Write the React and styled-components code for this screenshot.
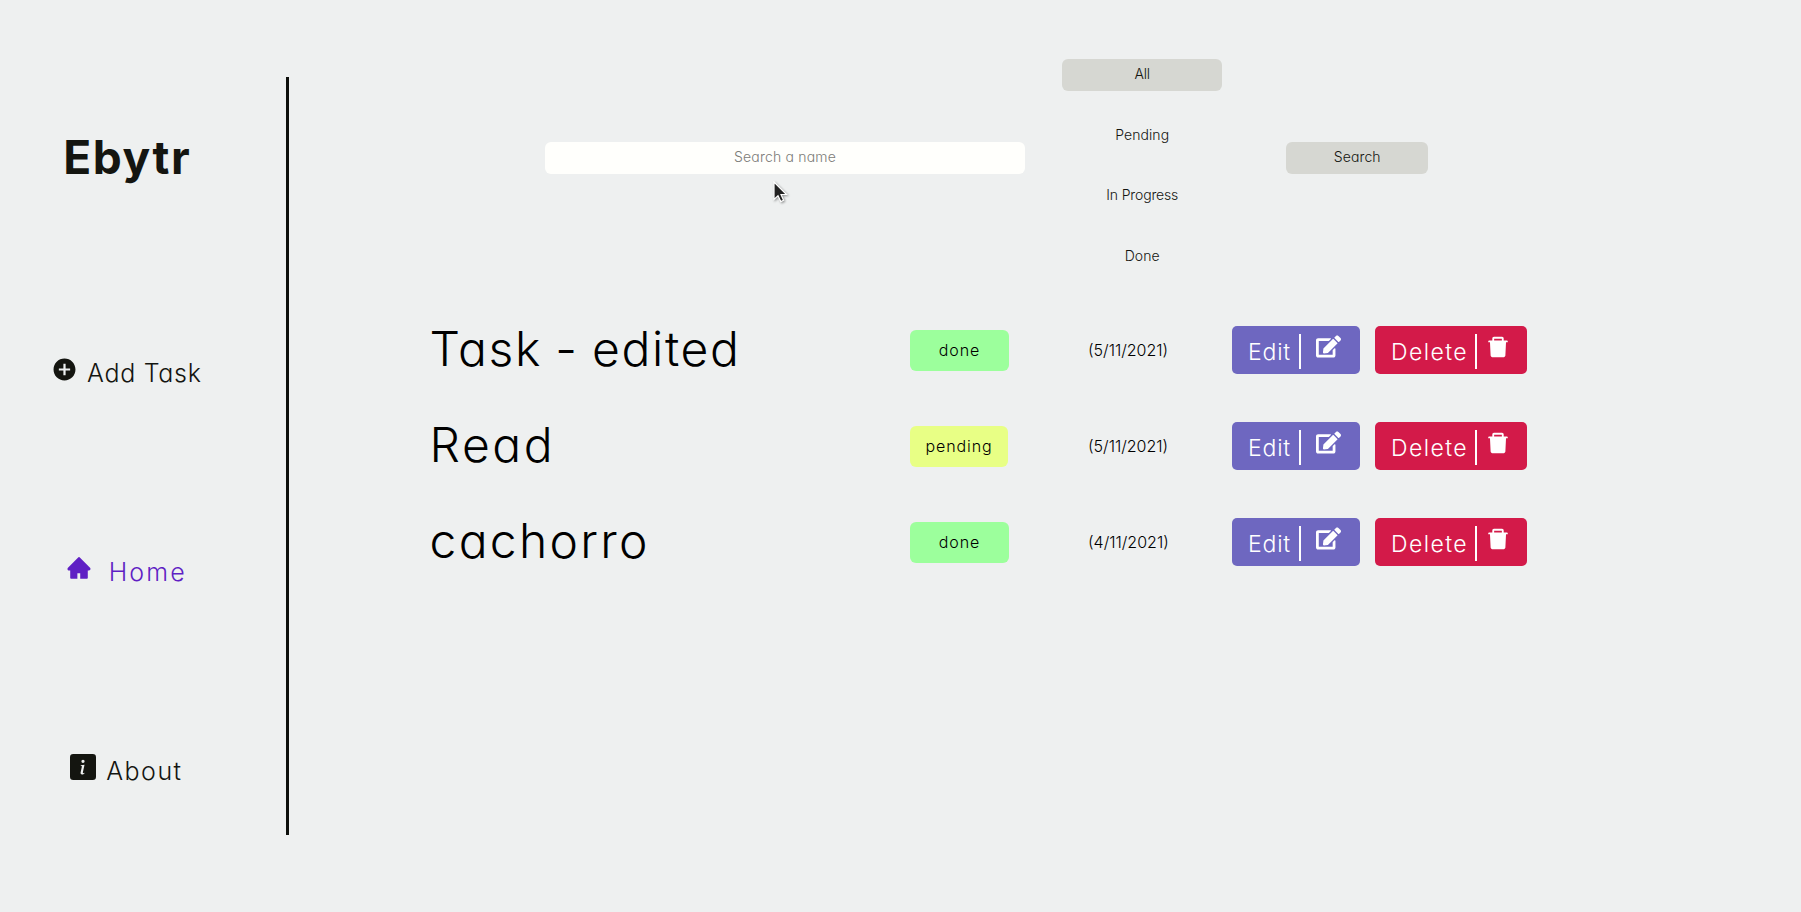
import React from "react";
import styled, { createGlobalStyle } from "styled-components";
import { IoMdAddCircle } from "react-icons/io";
import { AiFillHome, AiFillDelete } from "react-icons/ai";
import { BsFillInfoSquareFill } from "react-icons/bs";
import { FaEdit } from "react-icons/fa";

const GlobalStyle = createGlobalStyle`
  * { box-sizing: border-box; }
  body {
    margin: 0;
    background: #eef0f0;
    color: #141510;
    font-family: Inter, "Open Sans", sans-serif;
    font-weight: 300;
    font-feature-settings: "cv11";
  }
  button, input { font: inherit; font-feature-settings: inherit; color: inherit; border: none; margin: 0; padding: 0; }
  h1, ul { margin: 0; padding: 0; }
`;

const Page = styled.div`
  display: flex;
  height: 912px;
  overflow: hidden;
`;

const Label = styled.span`
  white-space: nowrap;
  letter-spacing: ${(p) => p.$spacing || 0}px;
`;

const Sidebar = styled.aside`
  display: flex;
  flex-direction: column;
  flex: none;
  width: 289px;
  height: 758px;
  margin-top: 77px;
  padding-top: 50px;
  border-right: 3px solid #0d0f0c;
`;

const Logo = styled.h1`
  height: 60px;
  margin-bottom: 166px;
  padding-left: 63.2px;
  font-size: 46px;
  font-weight: 660;
  line-height: 60px;
  letter-spacing: 1.6px;
`;

const Nav = styled.nav`
  display: flex;
  flex-direction: column;
  gap: 159px;
`;

const NavLink = styled.a`
  display: flex;
  align-items: center;
  gap: ${(p) => p.$gap}px;
  height: 40px;
  padding-left: ${(p) => p.$indent}px;
  font-size: 25px;
  color: ${(p) => (p.$active ? "#5f1fc4" : "#141510")};

  svg {
    flex: none;
    margin-bottom: 8px;
    font-size: ${(p) => p.$icon || 26}px;
  }
`;

const Main = styled.main`
  flex: 1;
`;

const SearchBar = styled.header`
  display: flex;
  align-items: flex-start;
  height: 326px;
  padding: 59px 0 0 256px;
  font-size: 14px;
  font-weight: 340;
`;

const SearchInput = styled.input`
  width: 480px;
  height: 32px;
  margin: 83px 37px 0 0;
  padding-bottom: 4px;
  border-radius: 6px;
  background: #fffffc;
  text-align: center;
  letter-spacing: 0.2px;

  &::placeholder { color: #7c7c78; opacity: 1; }
`;

const Filters = styled.div`
  display: flex;
  flex-direction: column;
  gap: 28.4px;
`;

const Button = styled.button`
  width: ${(p) => p.$width}px;
  height: 32px;
  padding: 0 0 ${(p) => (p.$filled ? 4 : 2)}px 0.5px;
  border-radius: 6px;
  background: ${(p) => (p.$filled ? "#d6d7d2" : "transparent")};
`;

const SearchButton = styled(Button)`
  margin: 83px 0 0 64px;
`;

const TaskList = styled.ul`
  display: flex;
  flex-direction: column;
  gap: 48px;
  padding-left: 140px;
  list-style: none;
  color: #000;
`;

const TaskRow = styled.li`
  display: grid;
  grid-template-columns: 481px 178px 144px 143px 152px;
  grid-template-rows: 48px;
  align-items: center;
`;

const TaskName = styled.div`
  height: 48px;
  padding-left: 0.5px;
  font-size: 48px;
  line-height: 45px;
  word-spacing: -2px;
`;

const badgeColors = { done: "#9cff9c", pending: "#e8ff85" };

const Badge = styled.div`
  display: flex;
  align-items: center;
  justify-content: center;
  width: ${(p) => (p.$status === "done" ? 99 : 98)}px;
  height: 41px;
  border-radius: 6px;
  background: ${(p) => badgeColors[p.$status]};
  font-size: 16px;
`;

const TaskDate = styled.div`
  font-size: 16px;
`;

const Action = styled.button`
  display: flex;
  align-items: center;
  width: ${(p) => p.$width}px;
  height: 48px;
  padding-left: 16px;
  border-radius: 5px;
  background: ${(p) => p.$color};
  color: #fff;
  font-size: 23px;
`;

const ActionLabel = styled(Label)`
  width: ${(p) => p.$width}px;
  padding-top: 3px;
  text-align: left;
`;

const Divider = styled.span`
  width: 2px;
  height: 35px;
  margin-top: 3px;
  background: #fff;
`;

const ActionIcon = styled.span`
  display: flex;
  margin: 0 0 7px ${(p) => p.$gap}px;
  font-size: ${(p) => p.$size}px;
`;

const Cursor = styled.svg`
  position: absolute;
  left: 773px;
  top: 181px;
  filter: drop-shadow(1px 1px 1px rgba(0, 0, 0, 0.4));
`;

const links = [
  { text: "Add Task", Icon: IoMdAddCircle, icon: 27, indent: 51, gap: 9, spacing: 0.7 },
  { text: "Home", Icon: AiFillHome, indent: 66.2, gap: 16.5, spacing: 2.1, active: true },
  { text: "About", Icon: BsFillInfoSquareFill, indent: 70, gap: 10.2, spacing: 1.5 },
];

const filters = [
  { text: "All", spacing: -0.2 },
  { text: "Pending", spacing: 0.05 },
  { text: "In Progress", spacing: -0.15 },
  { text: "Done", spacing: 0.1 },
];

const tasks = [
  { name: "Task - edited", spacing: 1.7, status: "done", date: "(5/11/2021)" },
  { name: "Read", spacing: 2.6, status: "pending", date: "(5/11/2021)" },
  { name: "cachorro", spacing: 2.3, status: "done", date: "(4/11/2021)" },
];

export default function App() {
  return (
    <>
      <GlobalStyle />
      <Page>
        <Sidebar>
          <Logo>Ebytr</Logo>
          <Nav>
            {links.map(({ text, Icon, icon, indent, gap, spacing, active }) => (
              <NavLink key={text} $icon={icon} $indent={indent} $gap={gap} $active={active}>
                <Icon />
                <Label $spacing={spacing}>{text}</Label>
              </NavLink>
            ))}
          </Nav>
        </Sidebar>
        <Main>
          <SearchBar>
            <SearchInput placeholder="Search a name" />
            <Filters>
              {filters.map(({ text, spacing }, i) => (
                <Button key={text} $width={160} $filled={i === 0}>
                  <Label $spacing={spacing}>{text}</Label>
                </Button>
              ))}
            </Filters>
            <SearchButton $width={142} $filled>
              <Label $spacing={0.1}>Search</Label>
            </SearchButton>
          </SearchBar>
          <TaskList>
            {tasks.map(({ name, spacing, status, date }) => (
              <TaskRow key={name}>
                <TaskName>
                  <Label $spacing={spacing}>{name}</Label>
                </TaskName>
                <Badge $status={status}>
                  <Label $spacing={0.9}>{status}</Label>
                </Badge>
                <TaskDate>
                  <Label>{date}</Label>
                </TaskDate>
                <Action $width={128} $color="#6e67c0">
                  <ActionLabel $width={51} $spacing={0.8}>Edit</ActionLabel>
                  <Divider />
                  <ActionIcon $gap={15} $size={25}><FaEdit /></ActionIcon>
                </Action>
                <Action $width={152} $color="#d31a49">
                  <ActionLabel $width={84} $spacing={1.4}>Delete</ActionLabel>
                  <Divider />
                  <ActionIcon $gap={8} $size={26}><AiFillDelete /></ActionIcon>
                </Action>
              </TaskRow>
            ))}
          </TaskList>
        </Main>
      </Page>
      <Cursor width="16" height="22" viewBox="0 0 16 22">
        <path d="M1 1V18.5L5 14.8L7.8 20.6L10.6 19.3L8 13.5H13.5Z" fill="#222" stroke="#fff" strokeWidth="1.2" />
      </Cursor>
    </>
  );
}
